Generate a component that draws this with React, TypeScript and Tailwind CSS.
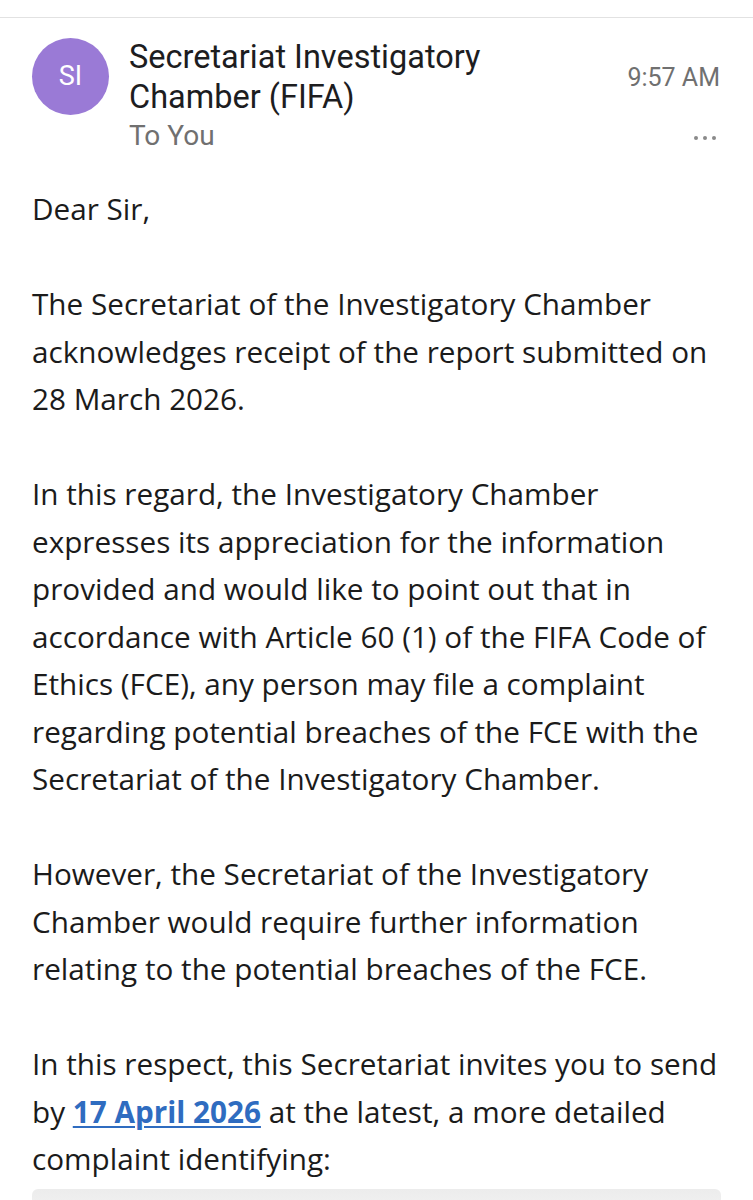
import React from "react";

const paragraphs: React.ReactNode[][] = [
  [
    "The Secretariat of the Investigatory Chamber",
    "acknowledges receipt of the report submitted on",
    "28 March 2026.",
  ],
  [
    "In this regard, the Investigatory Chamber",
    "expresses its appreciation for the information",
    "provided and would like to point out that in",
    "accordance with Article 60 (1) of the FIFA Code of",
    "Ethics (FCE), any person may file a complaint",
    "regarding potential breaches of the FCE with the",
    "Secretariat of the Investigatory Chamber.",
  ],
  [
    "However, the Secretariat of the Investigatory",
    "Chamber would require further information",
    "relating to the potential breaches of the FCE.",
  ],
  [
    "In this respect, this Secretariat invites you to send",
    <>
      by{" "}
      <a href="#" className="font-bold text-[#2f6cc0] underline underline-offset-[3px] decoration-2">
        17 April 2026
      </a>{" "}
      at the latest, a more detailed
    </>,
    "complaint identifying:",
  ],
];

export default function App() {
  return (
    <div className="w-[753px] h-[1200px] overflow-hidden bg-white">
      <div className="h-[18px] border-b border-[#e2e2e2]" />
      <div className="flex items-start pl-[32px] pr-[33px] pt-[19px]" style={{ fontFamily: "Roboto, sans-serif" }}>
        <div className="flex h-[77px] w-[77px] shrink-0 items-center justify-center rounded-full bg-[#9a7ad6] text-[27px] text-white mt-[1px]">
          SI
        </div>
        <div className="ml-[20px] flex-1 pt-[0px]">
          <div className="text-[32.5px] leading-[40px] text-[#1d1d1f]">
            Secretariat Investigatory
            <br />
            Chamber (FIFA)
          </div>
          <div className="text-[28px] leading-[38px] text-[#707070]">To You</div>
        </div>
        <div className="flex flex-col items-end pt-[24px]">
          <div className="text-[25px] leading-[34px] text-[#707070]">9:57 AM</div>
          <div className="mt-[41px] mr-[4px] flex gap-[5px]">
            <span className="h-[4px] w-[4px] rounded-full bg-[#8a8a8a]" />
            <span className="h-[4px] w-[4px] rounded-full bg-[#8a8a8a]" />
            <span className="h-[4px] w-[4px] rounded-full bg-[#8a8a8a]" />
          </div>
        </div>
      </div>

      <div className="px-[32px] pt-[30px] text-[29.7px] leading-[47.5px] text-[#1b1b1b]" style={{ fontFamily: "'Open Sans', sans-serif" }}>
        <p>Dear Sir,</p>
        {paragraphs.map((lines, i) => (
          <p key={i} className="mt-[47.5px]">
            {lines.map((line, j) => (
              <span key={j} className="block whitespace-nowrap">
                {line}
              </span>
            ))}
          </p>
        ))}
      </div>
      <div className="mx-[32px] mt-[6px] h-[40px] rounded-t-md bg-gradient-to-b from-[#ececec] to-[#f6f6f6]" />
    </div>
  );
}
